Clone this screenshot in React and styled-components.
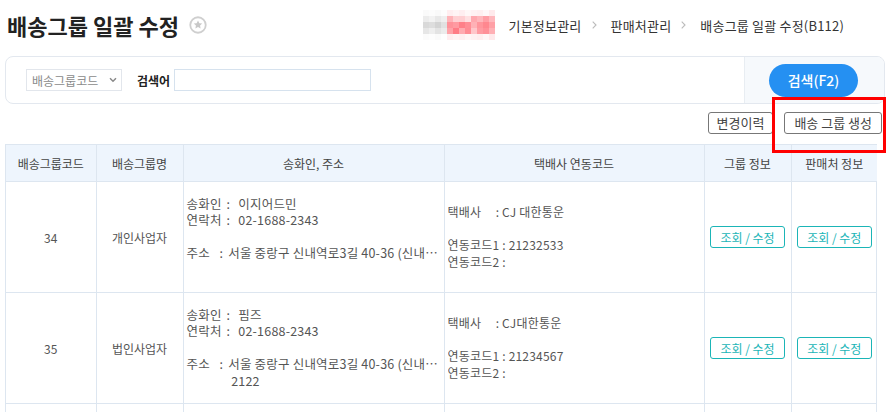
import React from 'react'
import styled, { createGlobalStyle } from 'styled-components'

const GlobalStyle = createGlobalStyle`
  body {
    margin: 0;
    background: #fff;
    font-family: 'Noto Sans CJK KR', 'Noto Sans', sans-serif;
    color: #333;
  }
`

const Page = styled.div`
  position: relative;
  width: 892px;
  height: 412px;
  overflow: hidden;
`

const Header = styled.div`
  display: flex;
  align-items: center;
  justify-content: space-between;
  height: 50px;
  margin-bottom: 6px;
  padding: 0 48px 0 7px;
`

const TitleWrap = styled.div`
  display: flex;
  align-items: center;
  gap: 10px;
`

const Title = styled.h1`
  margin: 0;
  font-size: 22px;
  font-weight: 700;
  color: #222;
`

const Breadcrumb = styled.div`
  display: flex;
  align-items: center;
  font-size: 13px;
  letter-spacing: 0.2px;
  color: #333;
`

const Crumb = styled.span`
  white-space: nowrap;
`

const Sep = styled.span`
  display: inline-flex;
  margin: 0 14px 0 10px;
`

const SearchPanel = styled.div`
  display: flex;
  margin: 0 7px 0 5px;
  height: 46px;
  border: 1px solid #e3e8ef;
  border-radius: 8px;
  overflow: hidden;
`

const SearchFields = styled.div`
  flex: 1;
  display: flex;
  align-items: center;
  padding-left: 20px;
`

const SelectBox = styled.div`
  display: flex;
  align-items: center;
  justify-content: space-between;
  box-sizing: border-box;
  width: 96px;
  height: 22px;
  padding: 0 4px 0 5px;
  border: 1px solid #e2e6ec;
  font-size: 12px;
  color: #8a8a8a;
`

const FieldLabel = styled.span`
  margin: 0 4px 0 15px;
  font-size: 12px;
  font-weight: 700;
  color: #222;
`

const TextInput = styled.input`
  box-sizing: border-box;
  width: 197px;
  height: 22px;
  border: 1px solid #d6e2ee;
  outline: none;
`

const SearchAction = styled.div`
  display: flex;
  align-items: center;
  justify-content: center;
  width: 139px;
  background: #f6f9fc;
  border-left: 1px solid #e8edf2;
`

const SearchButton = styled.button`
  width: 89px;
  height: 33px;
  margin-left: -2px;
  border: 0;
  border-radius: 17px;
  background: #2590f2;
  color: #fff;
  font-family: inherit;
  font-size: 14px;
  font-weight: 500;
`

const ActionRow = styled.div`
  display: flex;
  justify-content: flex-end;
  gap: 11px;
  margin: 8px 10px 10px 0;
`

const OutlineButton = styled.button`
  height: 22px;
  padding: 0 ${p => p.$pad || 8}px;
  border: 1px solid #777;
  border-radius: 3px;
  background: #fff;
  color: #444;
  font-family: inherit;
  font-size: 13px;
  line-height: 20px;
`

const Highlight = styled.div`
  position: absolute;
  left: 772px;
  top: 97px;
  width: 114px;
  height: 56px;
  box-sizing: border-box;
  border: 3px solid #f00;
`

const TableWrap = styled.div`
  margin-left: 5px;
  width: 872px;
  height: 300px;
  box-sizing: border-box;
  border: 1px solid #dde6f0;
  border-bottom: 0;
`

const Table = styled.table`
  width: 100%;
  border-collapse: collapse;
  table-layout: fixed;
  font-size: 12px;
`

const Th = styled.th`
  height: 36px;
  padding: 0;
  background: #eef5fd;
  color: #444;
  font-weight: 400;
  border-right: 1px solid #dde6f0;
  border-bottom: 1px solid #dde6f0;
  &:last-child {
    border-right: 0;
  }
`

const Td = styled.td`
  height: 110px;
  padding: 0 ${p => (p.$left ? 3 : 0)}px;
  text-align: ${p => (p.$left ? 'left' : 'center')};
  vertical-align: middle;
  color: #555;
  border-right: 1px solid #dde6f0;
  border-bottom: 1px solid #dde6f0;
  &:last-child {
    border-right: 0;
  }
`

const Lines = styled.div`
  display: flex;
  flex-direction: column;
  line-height: 16.5px;
  font-size: ${p => (p.$wide ? 12.5 : 12)}px;
  letter-spacing: 0.2px;
`

const Line = styled.div`
  white-space: nowrap;
  overflow: hidden;
  text-overflow: ellipsis;
  min-height: 16.5px;
`

const KeyRow = styled.div`
  display: flex;
  white-space: nowrap;
  min-height: 16.5px;
`

const Key = styled.span`
  flex: none;
  width: ${p => (p.$w ? `${p.$w}px` : 'auto')};
`

const Colon = styled.span`
  flex: none;
  margin: 0 ${p => p.$gap ?? 8}px 0 5px;
`

const Value = styled.div`
  flex: 1;
  min-width: 0;
`

const TealButton = styled.button`
  width: 75px;
  height: 22px;
  padding: 0;
  border: 1px solid #1bb5b7;
  border-radius: 3px;
  background: #fff;
  color: #1bb5b7;
  font-family: inherit;
  font-size: 12px;
`

const StarIcon = () => (
  <svg width="18" height="18" viewBox="0 0 20 20">
    <circle cx="10" cy="10" r="8.6" fill="none" stroke="#cfcfcf" strokeWidth="2" />
    <path
      d="M10 5l1.5 3 3.2.4-2.4 2.2.6 3.2L10 12.3l-2.9 1.5.6-3.2-2.4-2.2 3.2-.4z"
      fill="#c8c8c8"
    />
  </svg>
)

const Chevron = ({ color = '#bbb' }) => (
  <svg width="5" height="8" viewBox="0 0 5 8">
    <path d="M0.7 0.7L4 4 0.7 7.3" fill="none" stroke={color} strokeWidth="1.1" />
  </svg>
)

const DownChevron = () => (
  <svg width="8" height="6" viewBox="0 0 8 6">
    <path d="M1 1.2l3 3 3-3" fill="none" stroke="#8a8a8a" strokeWidth="1.5" />
  </svg>
)

const mosaic = [
  ['#fafafa', '#fcfcfc', '#f9f9f9', '#fdfdfd', '#ffeef0', '#fff4f5', '#ffeef0', '#fff7f7', '#fff2f3', '#ffeff0', '#fff7f8', '#ffeaec'],
  ['#ececec', '#f2f2f2', '#e8e8e8', '#efefef', '#ffb3b8', '#ffd0d3', '#ffcfd2', '#ffe0e2', '#ffa8ae', '#ffb6bb', '#ff9ea5', '#ffb8bd'],
  ['#d9d9d9', '#dddddd', '#d3d3d3', '#e1e1e1', '#ff929a', '#ff9aa1', '#ff8089', '#ff8e96', '#ffb1b6', '#ff959c', '#ff878f', '#ffa0a6'],
  ['#e6e6e6', '#eeeeee', '#e3e3e3', '#ebebeb', '#ffa2a8', '#ff7c86', '#ffaab0', '#ff8c94', '#ffc6ca', '#ff9ba2', '#ff9098', '#ffb0b5'],
  ['#fbfbfb', '#fdfdfd', '#fafafa', '#fefefe', '#ffedef', '#fff3f4', '#ffeff0', '#fff6f6', '#fff1f2', '#ffeeef', '#fff6f7', '#ffe9eb'],
]

const Mosaic = () => (
  <svg width="72" height="30" viewBox="0 0 72 30" style={{ marginRight: 14 }}>
    {mosaic.map((row, r) =>
      row.map((c, i) => <rect key={`${r}-${i}`} x={i * 6} y={r * 6} width="6" height="6" fill={c} />)
    )}
  </svg>
)

const rows = [
  {
    code: '34',
    name: '개인사업자',
    sender: '이지어드민',
    tel: '02-1688-2343',
    addr: ['서울 중랑구 신내역로3길 40-36 (신내동, 신내데시앙플렉스)', ''],
    courier: 'CJ 대한통운',
    code1: '21232533',
  },
  {
    code: '35',
    name: '법인사업자',
    sender: '핌즈',
    tel: '02-1688-2343',
    addr: ['서울 중랑구 신내역로3길 40-36 (신내동, 신내데시앙플렉스)', '\u00a02122'],
    courier: 'CJ대한통운',
    code1: '21234567',
  },
  {
    code: '36',
    name: '기타',
    sender: '이지어드민',
    tel: '02-1688-2343',
    addr: ['서울 중랑구 신내역로3길 40-36', ''],
    courier: 'CJ 대한통운',
    code1: '21230000',
  },
]

const columns = [
  { title: '배송그룹코드', width: 90 },
  { title: '배송그룹명', width: 87 },
  { title: '송화인, 주소', width: 261 },
  { title: '택배사 연동코드', width: 260 },
  { title: '그룹 정보', width: 87 },
  { title: '판매처 정보', width: 86 },
]

export default function App() {
  return (
    <Page>
      <GlobalStyle />
      <Header>
        <TitleWrap>
          <Title>배송그룹 일괄 수정</Title>
          <StarIcon />
        </TitleWrap>
        <Breadcrumb>
          <Mosaic />
          <Crumb>기본정보관리</Crumb>
          <Sep>
            <Chevron />
          </Sep>
          <Crumb>판매처관리</Crumb>
          <Sep>
            <Chevron />
          </Sep>
          <Crumb>배송그룹 일괄 수정(B112)</Crumb>
        </Breadcrumb>
      </Header>

      <SearchPanel>
        <SearchFields>
          <SelectBox>
            <span>배송그룹코드</span>
            <DownChevron />
          </SelectBox>
          <FieldLabel>검색어</FieldLabel>
          <TextInput />
        </SearchFields>
        <SearchAction>
          <SearchButton>검색(F2)</SearchButton>
        </SearchAction>
      </SearchPanel>

      <ActionRow>
        <OutlineButton>변경이력</OutlineButton>
        <OutlineButton $pad={9}>배송 그룹 생성</OutlineButton>
      </ActionRow>
      <Highlight />

      <TableWrap>
        <Table>
          <colgroup>
            {columns.map(c => (
              <col key={c.title} style={{ width: c.width }} />
            ))}
          </colgroup>
          <thead>
            <tr>
              {columns.map(c => (
                <Th key={c.title}>{c.title}</Th>
              ))}
            </tr>
          </thead>
          <tbody>
            {rows.map(r => (
              <tr key={r.code}>
                <Td>{r.code}</Td>
                <Td>{r.name}</Td>
                <Td $left>
                  <Lines $wide>
                    <KeyRow>
                      <Key>송화인</Key>
                      <Colon>:</Colon>
                      <Value>{r.sender}</Value>
                    </KeyRow>
                    <KeyRow>
                      <Key>연락처</Key>
                      <Colon>:</Colon>
                      <Value>{r.tel}</Value>
                    </KeyRow>
                    <Line />
                    <KeyRow>
                      <Key $w={28}>주소</Key>
                      <Colon $gap={5}>:</Colon>
                      <Value>
                        {r.addr.map((a, i) => (
                          <Line key={i}>{a}</Line>
                        ))}
                      </Value>
                    </KeyRow>
                  </Lines>
                </Td>
                <Td $left>
                  <Lines>
                    <Line>택배사&nbsp;&nbsp;&nbsp;&nbsp;&nbsp;: {r.courier}</Line>
                    <Line />
                    <Line>연동코드1 : {r.code1}</Line>
                    <Line>연동코드2 :</Line>
                  </Lines>
                </Td>
                <Td>
                  <TealButton>조회 / 수정</TealButton>
                </Td>
                <Td>
                  <TealButton>조회 / 수정</TealButton>
                </Td>
              </tr>
            ))}
          </tbody>
        </Table>
      </TableWrap>
    </Page>
  )
}
